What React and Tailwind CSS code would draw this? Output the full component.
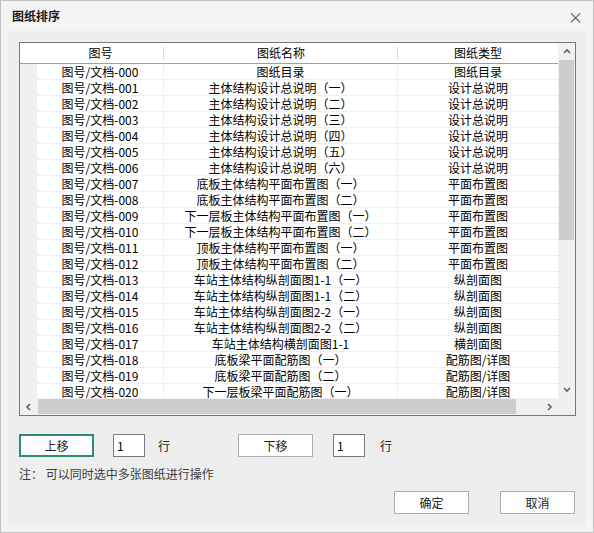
import React from "react";

const rows = [
  ["图号/文档-000", "图纸目录", "图纸目录"],
  ["图号/文档-001", "主体结构设计总说明（一）", "设计总说明"],
  ["图号/文档-002", "主体结构设计总说明（二）", "设计总说明"],
  ["图号/文档-003", "主体结构设计总说明（三）", "设计总说明"],
  ["图号/文档-004", "主体结构设计总说明（四）", "设计总说明"],
  ["图号/文档-005", "主体结构设计总说明（五）", "设计总说明"],
  ["图号/文档-006", "主体结构设计总说明（六）", "设计总说明"],
  ["图号/文档-007", "底板主体结构平面布置图（一）", "平面布置图"],
  ["图号/文档-008", "底板主体结构平面布置图（二）", "平面布置图"],
  ["图号/文档-009", "下一层板主体结构平面布置图（一）", "平面布置图"],
  ["图号/文档-010", "下一层板主体结构平面布置图（二）", "平面布置图"],
  ["图号/文档-011", "顶板主体结构平面布置图（一）", "平面布置图"],
  ["图号/文档-012", "顶板主体结构平面布置图（二）", "平面布置图"],
  ["图号/文档-013", "车站主体结构纵剖面图1-1（一）", "纵剖面图"],
  ["图号/文档-014", "车站主体结构纵剖面图1-1（二）", "纵剖面图"],
  ["图号/文档-015", "车站主体结构纵剖面图2-2（一）", "纵剖面图"],
  ["图号/文档-016", "车站主体结构纵剖面图2-2（二）", "纵剖面图"],
  ["图号/文档-017", "车站主体结构横剖面图1-1", "横剖面图"],
  ["图号/文档-018", "底板梁平面配筋图（一）", "配筋图/详图"],
  ["图号/文档-019", "底板梁平面配筋图（二）", "配筋图/详图"],
  ["图号/文档-020", "下一层板梁平面配筋图（一）", "配筋图/详图"],
];

const Chevron = ({ dir }) => {
  const d = {
    up: "M1 5 L4 2 L7 5",
    down: "M1 2 L4 5 L7 2",
    left: "M5 1 L2 4 L5 7",
    right: "M2 1 L5 4 L2 7",
  }[dir];
  return (
    <svg width="8" height="8" viewBox="0 0 8 8">
      <path d={d} fill="none" stroke="#606060" strokeWidth="1.6" />
    </svg>
  );
};

const Btn = ({ children, active }) => (
  <button
    className={
      "w-[75px] h-[23px] bg-[#fdfdfd] text-[12px] text-[#222] " +
      (active ? "border-2 border-[#2e8b7c]" : "border border-[#adadad]")
    }
  >
    {children}
  </button>
);

const NumBox = () => (
  <div className="w-[32px] h-[23px] border border-[#7a7a7a] bg-white flex items-center pl-[3px] text-[12px] text-black">
    1
  </div>
);

export default function App() {
  return (
    <div
      className="w-[594px] h-[533px] border border-[#c2c2c2] bg-[#f4f4f4] flex flex-col text-black"
      style={{ fontFamily: '"Noto Sans CJK SC", "Noto Sans", sans-serif' }}
    >
      {/* title bar */}
      <div className="h-[30px] flex items-center justify-between pl-[11px] pr-[10px]">
        <span className="text-[12px] font-semibold text-[#1a1a1a]">图纸排序</span>
        <span className="text-[15px] text-[#555] leading-none">×</span>
      </div>

      {/* body */}
      <div className="flex-1 mx-[7px] mb-[7px] bg-[#eeeeee] pl-[11px] pr-[10px] pt-[11px] flex flex-col">
        {/* list */}
        <div className="h-[374px] border border-[#767676] bg-white flex flex-col">
          <div className="flex flex-1 min-h-0">
            <div className="w-[538px] flex flex-col overflow-hidden">
              {/* header */}
              <div className="h-[21px] shrink-0 flex border-b border-[#a0a0a0] bg-white text-[12px]">
                <div className="w-[17px]" />
                <div className="w-[127px] relative flex items-center justify-center">
                  图号
                  <span className="absolute right-0 top-[4px] h-[13px] w-px bg-[#dcdcdc]" />
                </div>
                <div className="w-[234px] relative flex items-center justify-center">
                  图纸名称
                  <span className="absolute right-0 top-[4px] h-[13px] w-px bg-[#dcdcdc]" />
                </div>
                <div className="w-[160px] flex items-center justify-center">图纸类型</div>
              </div>
              {/* rows */}
              <div className="flex-1 overflow-hidden">
                {rows.map((r) => (
                  <div key={r[0]} className="h-[16px] flex text-[12px] leading-[15px]">
                    <div className="w-[17px] bg-[#f0f0f0]" />
                    <div className="w-[127px] border-r border-b border-[#f0f0f0] text-center whitespace-nowrap">
                      {r[0]}
                    </div>
                    <div className="w-[234px] border-r border-b border-[#f0f0f0] text-center whitespace-nowrap">
                      {r[1]}
                    </div>
                    <div className="w-[160px] border-b border-[#f0f0f0] text-center whitespace-nowrap">
                      {r[2]}
                    </div>
                  </div>
                ))}
              </div>
            </div>
            {/* vertical scrollbar */}
            <div className="w-[17px] bg-[#f0f0f0] flex flex-col">
              <div className="h-[17px] flex items-center justify-center">
                <Chevron dir="up" />
              </div>
              <div className="flex-1 flex flex-col px-px">
                <div className="h-[180px] bg-[#cdcdcd]" />
              </div>
              <div className="h-[17px] flex items-center justify-center">
                <Chevron dir="down" />
              </div>
            </div>
          </div>
          {/* horizontal scrollbar */}
          <div className="h-[17px] flex bg-[#f0f0f0]">
            <div className="w-[17px] flex items-center justify-center">
              <Chevron dir="left" />
            </div>
            <div className="w-[504px] flex items-stretch py-px">
              <div className="w-[478px] ml-px bg-[#cdcdcd]" />
            </div>
            <div className="w-[17px] flex items-center justify-center">
              <Chevron dir="right" />
            </div>
            <div className="w-[17px] bg-[#f0f0f0]" />
          </div>
        </div>

        {/* move controls */}
        <div className="mt-[18px] flex items-center text-[12px] text-[#222]">
          <Btn active>上移</Btn>
          <div className="ml-[19px]">
            <NumBox />
          </div>
          <span className="ml-[13px]">行</span>
          <div className="ml-[68px]">
            <Btn>下移</Btn>
          </div>
          <div className="ml-[20px]">
            <NumBox />
          </div>
          <span className="ml-[15px]">行</span>
        </div>

        <div className="mt-[8px] text-[12px] text-[#3c3c3c]">注：&nbsp;可以同时选中多张图纸进行操作</div>

        <div className="mt-[8px] flex justify-end gap-[31px] pr-px">
          <Btn>确定</Btn>
          <Btn>取消</Btn>
        </div>
      </div>
    </div>
  );
}
